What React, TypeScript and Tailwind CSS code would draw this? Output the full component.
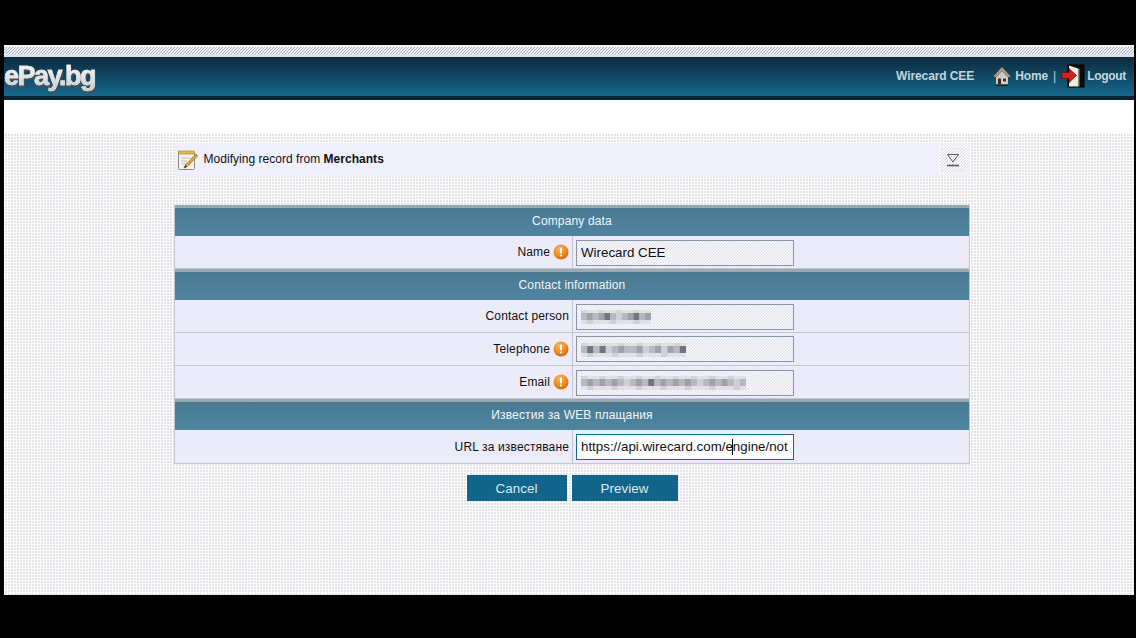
import React from "react";

const font = "font-['Liberation_Sans',Arial,sans-serif]";

function Warn() {
  return (
    <svg width="16" height="16" viewBox="0 0 16 16" className="shrink-0">
      <defs>
        <radialGradient id="w" cx="40%" cy="30%" r="75%">
          <stop offset="0" stopColor="#fbb45c" />
          <stop offset="0.6" stopColor="#f08a1c" />
          <stop offset="1" stopColor="#c9640a" />
        </radialGradient>
      </defs>
      <circle cx="8" cy="8" r="7.5" fill="url(#w)" />
      <rect x="7" y="3.5" width="2" height="6" rx="0.8" fill="#fff" />
      <rect x="7" y="10.5" width="2" height="2" rx="0.8" fill="#fff" />
    </svg>
  );
}

function Note() {
  return (
    <svg width="22" height="22" viewBox="0 0 22 22">
      <rect x="2.5" y="3.5" width="16" height="17" rx="1" fill="#f4f2ea" stroke="#8a8a80" />
      <rect x="2.5" y="2" width="16" height="3" fill="#e0b94a" stroke="#a08428" strokeWidth="0.6" />
      <path d="M5 9h9M5 12h6M5 15h5" stroke="#c4c4bc" />
      <path d="M20 5 L9.5 16 L8 19 L11 17.8 L21.5 7 Z" fill="#e8a93a" stroke="#8a5a10" strokeWidth="0.7" />
      <path d="M9.5 16 L8 19 L11 17.8 Z" fill="#333" />
    </svg>
  );
}

function Collapse() {
  return (
    <svg width="14" height="13" viewBox="0 0 14 13">
      <path d="M1.5 0.5H12.5L7 8Z" fill="none" stroke="#5a5a5a" />
      <path d="M1 11.5H13" stroke="#5a5a5a" strokeWidth="1.6" />
    </svg>
  );
}

function HomeIcon() {
  return (
    <svg width="20" height="22" viewBox="0 0 20 22">
      <path d="M0.5 12 L10 1.5 L19.5 12 L16.5 12.5 L10 6 L3.5 12.5Z" fill="#a89c88" stroke="#2a2a22" strokeWidth="0.7" />
      <path d="M4 12 L10 6 L16 12 V19.5 H4Z" fill="#cfc8b8" />
      <path d="M3.5 19.5 H16.5 V21 H3.5Z" fill="#1a262c" />
      <rect x="6" y="13.5" width="3" height="6" fill="#3e2a1c" />
      <rect x="10.5" y="13" width="4" height="4" fill="#2a3640" stroke="#f2eee2" strokeWidth="0.8" />
    </svg>
  );
}

function LogoutIcon() {
  return (
    <svg width="24" height="24" viewBox="0 0 24 24">
      <rect x="7" y="1" width="16" height="22" fill="#0c0c0c" stroke="#000" />
      <path d="M8 1.5 L17 4.5 V22.5 H8Z" fill="#eeece0" />
      <path d="M17 4.5 V22.5 H18.5 V4.5Z" fill="#8a8a78" />
      <path d="M1 8.5 H8 V4.5 L15.5 11.5 L8 18.5 V14.5 H1Z" fill="#d4201c" stroke="#5e0e0c" strokeWidth="0.7" />
    </svg>
  );
}

/* pixelated mosaic that hides redacted values */
const shades: Record<string, string> = { a: "#d0d0d8", b: "#b8b8c0", c: "#a0a0a8", d: "#74747c" };

function Mosaic({ cells, width }: { cells: string; width: number }) {
  const step = width / cells.length;
  return (
    <svg width={width} height="18" viewBox={`0 0 ${width} 18`} className="shrink-0">
      <rect x="0" y="2" width={width} height="14" fill="#e0e0e8" />
      {cells.split("").map((c, i) => (
        <g key={i}>
          <rect x={i * step} y="5" width={step + 0.2} height="7" fill={shades[c]} />
          {i % 3 === 0 && <rect x={i * step} y="2" width={step + 0.2} height="3" fill="#d4d4dc" />}
          {i % 4 === 1 && <rect x={i * step} y="12" width={step + 0.2} height="4" fill="#cfcfd7" />}
        </g>
      ))}
    </svg>
  );
}

const hatch =
  "bg-[repeating-linear-gradient(135deg,#dedee8_0px,#dedee8_0.7071px,#f7f7fb_0.7071px,#f7f7fb_2.1213px)]";

function Field({ children, active }: { children: React.ReactNode; active?: boolean }) {
  return (
    <div
      className={`flex h-[26px] w-[218px] items-center overflow-hidden border pt-px pl-[4px] text-[13.33px] text-[#111] ${
        active ? "border-[#156a8c] bg-white" : `border-[#8a96a8] ${hatch}`
      }`}
    >
      {children}
    </div>
  );
}

function Section({ title }: { title: string }) {
  return (
    <div className="flex h-[31px] items-center justify-center border-t-[3px] border-[#9aa8b0] bg-[linear-gradient(#4a7a92,#4f84a0)] pb-[2px] text-[12px] tracking-[0.15px] text-[#f2f6f8]">
      {title}
    </div>
  );
}

function Row({
  label,
  warn,
  last,
  tight,
  children,
}: {
  label: string;
  warn?: boolean;
  last?: boolean;
  tight?: boolean;
  children: React.ReactNode;
}) {
  return (
    <div className={`flex h-[33px] bg-[#ebebf9] ${last ? "" : "border-b border-[#c6c6d0]"}`}>
      <div className="flex w-[398px] items-center justify-end gap-[3px] border-r border-[#c6c6d0] pr-[3px] text-[12px] leading-none tracking-[0.15px] text-[#111]">
        <span>{label}</span>
        {warn && <Warn />}
      </div>
      <div className={`flex flex-1 items-center pl-[3px] ${tight ? "" : "pt-[1px]"}`}>{children}</div>
    </div>
  );
}

export default function App() {
  return (
    <div className={`flex h-[638px] w-[1136px] flex-col bg-black pt-[45px] pb-[43px] pl-[4px] pr-[2px] ${font}`}>
      <div className="flex flex-1 flex-col bg-white">
        <div className="h-[12px] border-t-2 border-b-[3px] border-t-[#f4f4f8] border-b-[#dfe2ea] bg-[repeating-linear-gradient(135deg,#aeb2be_0px,#aeb2be_0.7071px,#eceef2_0.7071px,#eceef2_2.1213px)]" />
        <header className="flex h-[43px] items-center justify-between border-b-4 border-b-[#0a2434] bg-[linear-gradient(#0c2a3c,#15688e)]">
          <span className="relative -top-[1px] bg-[linear-gradient(#ffffff,#c8cacc)] bg-clip-text text-[27px] leading-[30px] font-bold tracking-[-1.5px] text-transparent drop-shadow-[1px_2px_0_#4a5058] [-webkit-text-stroke:0.5px_#e8e8e8]">
            ePay.bg
          </span>
          <nav className="relative -top-[1px] flex items-center pr-[8px] text-[12px] font-bold tracking-[-0.1px] text-[#c5d4dc]">
            <span className="mr-[18px]">Wirecard CEE</span>
            <HomeIcon />
            <span className="ml-[3px]">Home</span>
            <span className="ml-[5px] mr-[5px] font-normal">|</span>
            <LogoutIcon />
            <span className="ml-[2px] tracking-[-0.3px]">Logout</span>
          </nav>
        </header>
        <div className="h-[33px] bg-white" />
        <main className="flex flex-1 flex-col items-center bg-[#e4e4e8] bg-[linear-gradient(90deg,#ffffff_1px,transparent_1px),linear-gradient(#ffffff_1px,transparent_1px)] bg-[length:3px_3px] pt-[10px]">
          <div className="ml-[6px] flex h-[34px] w-[795px] items-center justify-between bg-[#f0f0fd] pl-[1px] text-[12px] tracking-[0.03px] text-[#111]">
            <div className="flex items-center gap-[6px]">
              <Note />
              <span className="relative -top-[1px]">
                Modifying record from <b>Merchants</b>
              </span>
            </div>
            <div className="mr-[3px] flex h-[28px] w-[28px] items-center justify-center border border-[#f8f8fc] bg-[repeating-linear-gradient(135deg,#d8d8e0_0px,#d8d8e0_0.7071px,#fafafc_0.7071px,#fafafc_2.1213px)]">
              <Collapse />
            </div>
          </div>

          <div className="mt-[28px] ml-[6px] w-[796px] border-x border-b border-[#c6c6d0]">
            <Section title="Company data" />
            <Row label="Name" warn>
              <Field>Wirecard CEE</Field>
            </Row>
            <Section title="Contact information" />
            <Row label="Contact person">
              <Field>
                <Mosaic cells="bcbcdbabcdbc" width={70} />
              </Field>
            </Row>
            <Row label="Telephone" warn tight>
              <Field>
                <Mosaic cells="bdbdabcbbcabcacbd" width={105} />
              </Field>
            </Row>
            <Row label="Email" warn>
              <Field>
                <Mosaic cells="bcbcbcbabcbdbcbcbcbabcbcbab" width={165} />
              </Field>
            </Row>
            <Section title="Известия за WEB плащания" />
            <Row label="URL за известяване" last tight>
              <Field active>
                <span className="whitespace-nowrap">
                  https://api.wirecard.com/e
                  <span className="-mx-[0.5px] inline-block h-[16px] w-px bg-black align-middle" />
                  ngine/not
                </span>
              </Field>
            </Row>
          </div>

          <div className="mt-[11px] ml-[6px] flex gap-[5px]">
            <button className="h-[26px] w-[100px] bg-[#12658a] pt-px text-[13.33px] tracking-[0.1px] text-[#dfeaf0]">Cancel</button>
            <button className="h-[26px] w-[106px] bg-[#12658a] pt-px text-[13.33px] tracking-[0.1px] text-[#dfeaf0]">Preview</button>
          </div>
        </main>
      </div>
    </div>
  );
}
